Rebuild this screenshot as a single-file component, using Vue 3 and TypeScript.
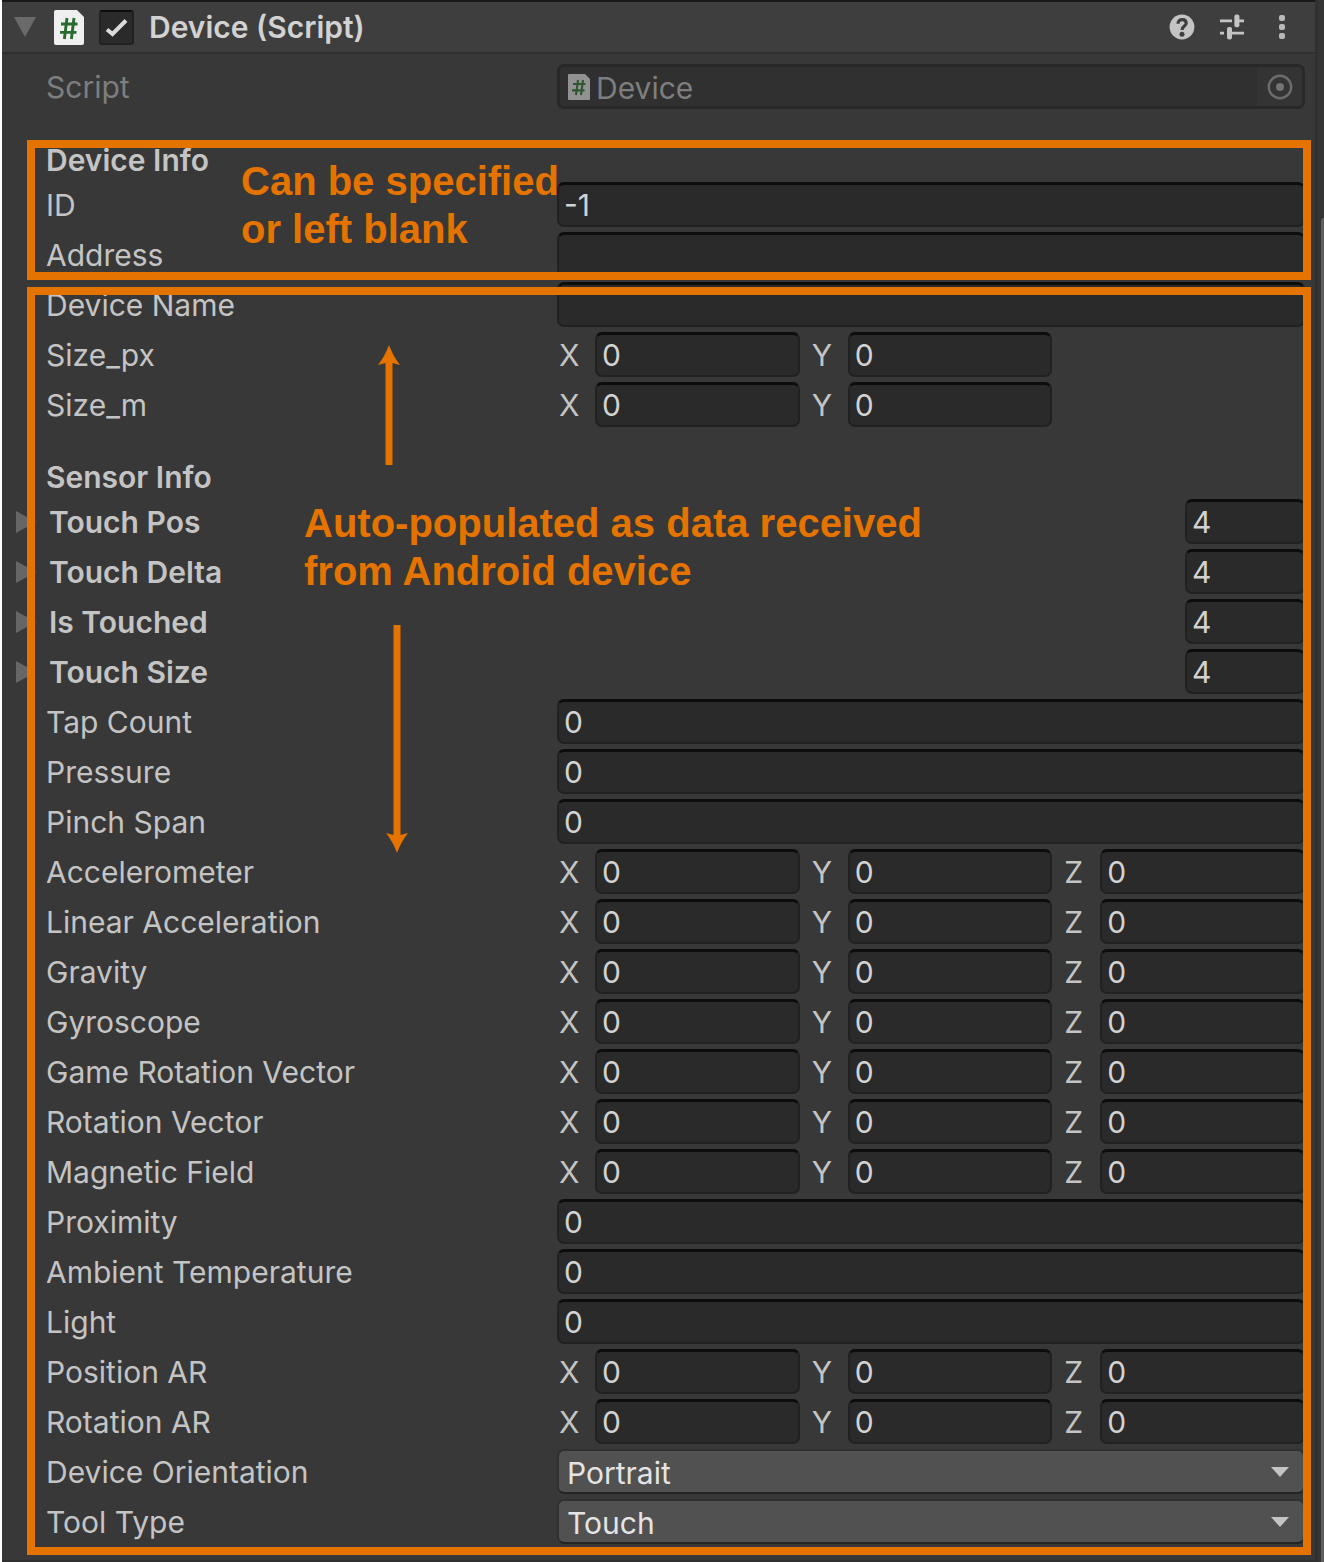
<script setup lang="ts">
import { reactive, ref } from 'vue'

type Kind = 'text' | 'vec2' | 'vec3' | 'array' | 'select'

interface Field {
  label: string
  kind: Kind
  value: string
}

const field = (label: string, kind: Kind, value = '0'): Field => ({ label, kind, value })

const deviceInfo = reactive<Field[]>([
  field('ID', 'text', '-1'),
  field('Address', 'text', ''),
  field('Device Name', 'text', ''),
  field('Size_px', 'vec2'),
  field('Size_m', 'vec2'),
])

const sensorInfo = reactive<Field[]>([
  field('Touch Pos', 'array', '4'),
  field('Touch Delta', 'array', '4'),
  field('Is Touched', 'array', '4'),
  field('Touch Size', 'array', '4'),
  field('Tap Count', 'text'),
  field('Pressure', 'text'),
  field('Pinch Span', 'text'),
  field('Accelerometer', 'vec3'),
  field('Linear Acceleration', 'vec3'),
  field('Gravity', 'vec3'),
  field('Gyroscope', 'vec3'),
  field('Game Rotation Vector', 'vec3'),
  field('Rotation Vector', 'vec3'),
  field('Magnetic Field', 'vec3'),
  field('Proximity', 'text'),
  field('Ambient Temperature', 'text'),
  field('Light', 'text'),
  field('Position AR', 'vec3'),
  field('Rotation AR', 'vec3'),
  field('Device Orientation', 'select', 'Portrait'),
  field('Tool Type', 'select', 'Touch'),
])

const sections = [
  { title: 'Device Info', fields: deviceInfo },
  { title: 'Sensor Info', fields: sensorInfo },
]

const enabled = ref(true)

const idFor = (label: string): string => label.toLowerCase().replace(/\W+/g, '-')
const axes = (kind: Kind): string[] => (kind === 'vec2' ? ['X', 'Y'] : ['X', 'Y', 'Z'])
</script>

<template>
  <div class="window">
    <main class="panel">
      <header class="header">
        <button class="fold" type="button" aria-label="Collapse component">
          <svg width="22" height="20" viewBox="0 0 22 20"><path d="M0 0H22L11 20Z" fill="#6a6a6a" /></svg>
        </button>
        <svg class="script-icon" width="30" height="35" viewBox="0 0 30 35">
          <path d="M2 0H23L30 7V33Q30 35 28 35H2Q0 35 0 33V2Q0 0 2 0Z" fill="#efefef" />
          <path d="M13 8L10.4 29M20 8L17.4 29M7 14H23.5M6 22.4H22.5" stroke="#2a6a2e" stroke-width="2.9" fill="none" />
        </svg>
        <span class="toggle">
          <input id="enabled" v-model="enabled" type="checkbox" />
          <svg v-if="enabled" width="35" height="35" viewBox="0 0 35 35">
            <path d="M8 19.5L13.5 24L27 10.5" stroke="#dadada" stroke-width="4" fill="none" />
          </svg>
        </span>
        <label class="title" for="enabled">Device (Script)</label>
        <div class="actions">
          <button type="button" aria-label="Help">
            <svg width="26" height="26" viewBox="0 0 26 26">
              <circle cx="13" cy="13" r="12.4" fill="#c4c4c4" />
              <path d="M9 9.8C9 7 10.8 5.6 13.2 5.6C15.6 5.6 17.2 7 17.2 9.2C17.2 12 13 12.2 13 16" stroke="#3e3e3e" stroke-width="3.2" fill="none" />
              <circle cx="13" cy="20.2" r="2.5" fill="#3e3e3e" />
            </svg>
          </button>
          <button type="button" aria-label="Presets">
            <svg width="26" height="26" viewBox="0 0 26 26">
              <path d="M1 6.8H13M20 6.8H25M1 19.2H5M12 19.2H25" stroke="#c4c4c4" stroke-width="2.8" />
              <rect x="15.4" y="0.6" width="5" height="12.6" rx="2" fill="#c4c4c4" />
              <rect x="8" y="13" width="5" height="12.6" rx="2" fill="#c4c4c4" />
            </svg>
          </button>
          <button type="button" aria-label="More options">
            <svg width="26" height="26" viewBox="0 0 26 26" fill="#b8b8b8">
              <rect x="10" y="1" width="6" height="6" rx="2" />
              <rect x="10" y="10" width="6" height="6" rx="2" />
              <rect x="10" y="19" width="6" height="6" rx="2" />
            </svg>
          </button>
        </div>
      </header>

      <form class="body" @submit.prevent>
        <div class="row script-row">
          <label class="label" for="script">Script</label>
          <div class="object">
            <svg width="22" height="26" viewBox="0 0 22 26">
              <path d="M1 0H17L22 5V25Q22 26 21 26H1Q0 26 0 25V1Q0 0 1 0Z" fill="#929292" />
              <path d="M10 6L8 21M15 6L13 21M5 10H17.5M4 16.4H16.5" stroke="#2f5531" stroke-width="2.1" fill="none" />
            </svg>
            <input id="script" value="Device" disabled />
            <button type="button" aria-label="Pick script" disabled>
              <svg width="26" height="26" viewBox="0 0 26 26">
                <circle cx="13" cy="13" r="11.2" stroke="#6c6c6c" stroke-width="2.4" fill="none" />
                <circle cx="13" cy="13" r="4" fill="#747474" />
              </svg>
            </button>
          </div>
        </div>

        <section v-for="section in sections" :key="section.title">
          <h2>{{ section.title }}</h2>
          <div v-for="f in section.fields" :key="f.label" class="row" :class="{ array: f.kind === 'array' }">
            <button v-if="f.kind === 'array'" class="fold" type="button" :aria-label="'Expand ' + f.label">
              <svg width="20" height="22" viewBox="0 0 20 22"><path d="M0 0L20 11L0 22Z" fill="#666666" /></svg>
            </button>
            <span v-if="f.kind === 'vec2' || f.kind === 'vec3'" class="label">{{ f.label }}</span>
            <label v-else class="label" :for="idFor(f.label)">{{ f.label }}</label>

            <div v-if="f.kind === 'vec2' || f.kind === 'vec3'" class="vector">
              <label v-for="axis in axes(f.kind)" :key="axis" class="axis">
                <span>{{ axis }}</span>
                <input class="input" type="text" :value="f.value" />
              </label>
            </div>
            <div v-else-if="f.kind === 'select'" class="dropdown">
              <select :id="idFor(f.label)">
                <option>{{ f.value }}</option>
              </select>
              <svg width="18" height="10" viewBox="0 0 18 10"><path d="M0 0H18L9 10Z" fill="#c4c4c4" /></svg>
            </div>
            <input v-else :id="idFor(f.label)" v-model="f.value" class="input" type="text" />
          </div>
        </section>
      </form>

      <div class="note-box optional"></div>
      <div class="note-box automatic"></div>
      <p class="note note-optional">Can be specified<br />or left blank</p>
      <p class="note note-automatic">Auto-populated as data received<br />from Android device</p>
      <svg class="arrow arrow-up" width="22" height="120" viewBox="0 0 22 120">
        <path d="M11 0Q15 11 22 20L14.5 18V120H7.5V18L0 20Q7 11 11 0Z" fill="#e57300" />
      </svg>
      <svg class="arrow arrow-down" width="22" height="228" viewBox="0 0 22 228">
        <path d="M11 228Q7 217 0 208L7.5 210V0H14.5V210L22 208Q15 217 11 228Z" fill="#e57300" />
      </svg>
    </main>
    <div class="scrollbar"><div class="thumb"></div></div>
  </div>
</template>

<style>
body {
  margin: 0;
  background: #ffffff;
}
</style>

<style scoped>
* {
  box-sizing: border-box;
}

.window {
  display: flex;
  margin-left: 2px;
  background: #383838;
  color: #c4c4c4;
  font-family: Inter, "Liberation Sans", sans-serif;
  font-size: 30px;
  font-optical-sizing: none;
  line-height: 44px;
}

.panel {
  position: relative;
  flex: 1;
  min-width: 0;
  border-top: 2px solid #191919;
  border-bottom: 2px solid #303030;
}

svg {
  display: block;
  flex: none;
}

button {
  padding: 0;
  border: 0;
  background: none;
}

input,
select {
  min-width: 0;
  margin: 0;
  font: inherit;
  font-optical-sizing: none;
}

.header {
  display: flex;
  align-items: center;
  height: 52px;
  padding-left: 12px;
  border-bottom: 2px solid #303030;
  background: #3e3e3e;
}

.script-icon {
  margin-left: 18px;
}

.toggle {
  position: relative;
  width: 35px;
  height: 35px;
  margin: 0 15px;
}

.toggle input {
  display: block;
  width: 35px;
  height: 35px;
  border: 2px solid #212121;
  border-top-color: #0d0d0d;
  border-radius: 3px;
  background: #2a2a2a;
  appearance: none;
}

.toggle svg {
  position: absolute;
  inset: 0;
  pointer-events: none;
}

.title {
  color: #d2d2d2;
  font-weight: 600;
}

.actions {
  display: flex;
  gap: 24px;
  margin-left: auto;
  padding-right: 20px;
}

.body {
  padding: 10px 10px 16px 44px;
}

.row {
  display: flex;
  align-items: center;
  height: 45px;
  margin-bottom: 5px;
}

section .row:last-child {
  margin-bottom: 0;
}

section + section {
  padding-top: 5px;
}

.script-row {
  margin-bottom: 6px;
}

.label {
  flex: none;
  width: 511px;
  white-space: nowrap;
}

h2 {
  margin: 0;
  padding: 23px 0 0;
  height: 67px;
  font-size: 30px;
  font-weight: 600;
  line-height: 44px;
}

.input {
  flex: 1;
  width: 0;
  height: 45px;
  padding: 0 5px;
  border: 2px solid #212121;
  border-top: 3px solid #0d0d0d;
  border-radius: 7px;
  background: #2a2a2a;
  color: #d2d2d2;
}

.array {
  margin-left: -30px;
}

.array .label {
  width: auto;
  margin-left: 13px;
  font-weight: 600;
}

.array .input {
  flex: none;
  width: 120px;
  margin-left: auto;
}

.vector {
  display: grid;
  flex: 1;
  grid-template-columns: repeat(3, 1fr);
  gap: 10px;
}

.axis {
  display: flex;
  line-height: 46px;
}

.axis span {
  flex: none;
  width: 38px;
  padding-left: 2px;
}

.dropdown {
  position: relative;
  flex: 1;
}

.dropdown select {
  display: block;
  width: 100%;
  height: 45px;
  padding: 0 40px 4px 8px;
  border: 2px solid #303030;
  border-bottom-color: #242424;
  border-radius: 7px;
  background: #515151;
  color: #e4e4e4;
  appearance: none;
}

.dropdown svg {
  position: absolute;
  top: 18px;
  right: 16px;
  pointer-events: none;
}

.script-row .label,
.object input {
  color: #7e7e7e;
}

.object {
  display: flex;
  flex: 1;
  align-items: center;
  height: 45px;
  padding-left: 8px;
  overflow: hidden;
  border: 3px solid #282828;
  border-radius: 7px;
  background: #303030;
}

.object input {
  flex: 1;
  padding: 2px 0 0 6px;
  border: 0;
  background: transparent;
}

.object button {
  display: flex;
  align-items: center;
  justify-content: center;
  width: 45px;
  height: 40px;
  background: #343434;
}

.note-box {
  position: absolute;
  right: 4px;
  left: 25px;
  border: 8px solid #e57300;
  pointer-events: none;
}

.optional {
  top: 138px;
  height: 140px;
}

.automatic {
  top: 285px;
  bottom: 5px;
}

.note {
  position: absolute;
  margin: 0;
  color: #e57300;
  font-family: "Liberation Sans", Arial, sans-serif;
  font-size: 40px;
  font-weight: 700;
  line-height: 48px;
  white-space: nowrap;
  pointer-events: none;
}

.note-optional {
  top: 155px;
  left: 239px;
}

.note-automatic {
  top: 497px;
  left: 302px;
}

.arrow {
  position: absolute;
  pointer-events: none;
}

.arrow-up {
  top: 343px;
  left: 376px;
}

.arrow-down {
  top: 623px;
  left: 384px;
}

.scrollbar {
  width: 9px;
  padding: 218px 0 0 3px;
  border-left: 3px solid #303030;
  background: #353535;
}

.thumb {
  height: 100%;
  border-radius: 4px 0 0 0;
  background: #5f5f5f;
}
</style>
